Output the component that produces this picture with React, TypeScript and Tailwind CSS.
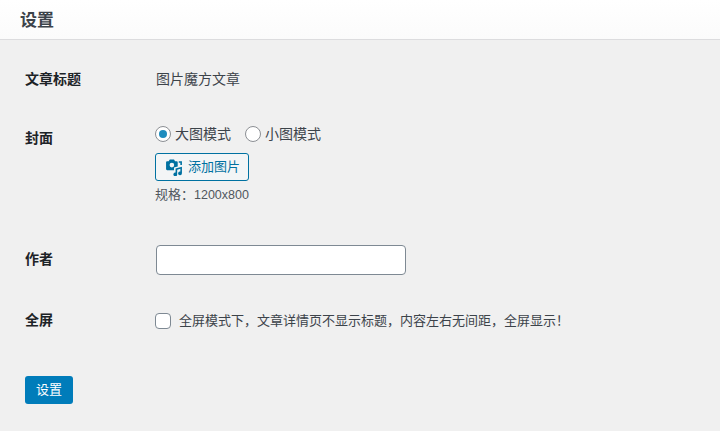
export default function App() {
  return (
    <div className="w-[720px] h-[431px] overflow-hidden bg-[#f0f0f0] text-[#3c434a] text-[13px] font-['Liberation_Sans','Noto_Sans_CJK_SC',sans-serif]">
      <header className="h-10 bg-gradient-to-b from-white to-[#fbfbfb] border-b border-[#dcdcde] pl-5 flex items-center">
        <h1 className="text-[17px] font-semibold text-[#3c434a] leading-none pt-[1px]">设置</h1>
      </header>
      <main className="pl-[25px]">
        <div className="flex h-[14px] mt-[32px] items-center">
          <div className="w-[131px] text-[14px] font-semibold text-[#1d2327]">文章标题</div>
          <div className="text-[14px]">图片魔方文章</div>
        </div>
        <div className="flex mt-[37px]">
          <div className="w-[130px] text-[14px] font-semibold text-[#1d2327] pt-[8px] leading-[14px]">封面</div>
          <div>
            <div className="flex items-center h-[22px]">
              <span className="w-4 h-4 rounded-full border border-[#8c8f94] bg-white flex items-center justify-center mr-[4px]">
                <span className="w-2 h-2 rounded-full bg-[#1e8cbe]" />
              </span>
              <span className="text-[14px] mr-[14px]">大图模式</span>
              <span className="w-4 h-4 rounded-full border border-[#8c8f94] bg-white mr-[4px]" />
              <span className="text-[14px]">小图模式</span>
            </div>
            <button className="mt-[8px] h-[28px] w-[94px] rounded-[3px] border border-[#0071a1] bg-[#f3f5f6] text-[#0071a1] flex items-center pl-[9px] gap-[5px]">
              <svg width="18" height="18" viewBox="0 0 17 17" fill="#0071a1">
                <path fillRule="evenodd" d="M4.500 1.500h4l1 1.500h1.500a1 1 0 0 1 1 1V8l-3.500 1v2.500H2a1 1 0 0 1-1-1V4a1 1 0 0 1 1-1h1.500zM6.500 4.500a2.200 2.200 0 1 0 0 4.400 2.200 2.200 0 0 0 0-4.400z" />
                <path d="M10 10l6-1.700v6.200a1.800 1.800 0 1 1-1.500-1.800V10.200L11.500 11v4.500a1.800 1.800 0 1 1-1.500-1.800z" />
                <path d="M13 3h3v3.500h-1.500V4.500H13z" />
              </svg>
              <span>添加图片</span>
            </button>
            <div className="mt-[5px] text-[13px] leading-[17px] text-[#50575e]">规格：<span className="text-[12.500px]">1200x800</span></div>
          </div>
        </div>
        <div className="flex items-center mt-[41px]">
          <div className="w-[131px] text-[14px] font-semibold text-[#1d2327] pb-[2px]">作者</div>
          <input className="w-[250px] h-[30px] bg-white border border-[#7e8993] rounded-[4px]" />
        </div>
        <div className="flex items-center mt-[35px]">
          <div className="w-[130px] text-[14px] font-semibold text-[#1d2327]">全屏</div>
          <span className="w-4 h-4 rounded-[4px] border border-[#7e8993] bg-white mr-[8px]" />
          <span className="text-[13px]">全屏模式下，文章详情页不显示标题，内容左右无间距，全屏显示！</span>
        </div>
        <button className="mt-[45px] w-[48px] h-[28px] rounded-[3px] bg-[#007cba] text-white text-[13px] block">设置</button>
      </main>
    </div>
  );
}
